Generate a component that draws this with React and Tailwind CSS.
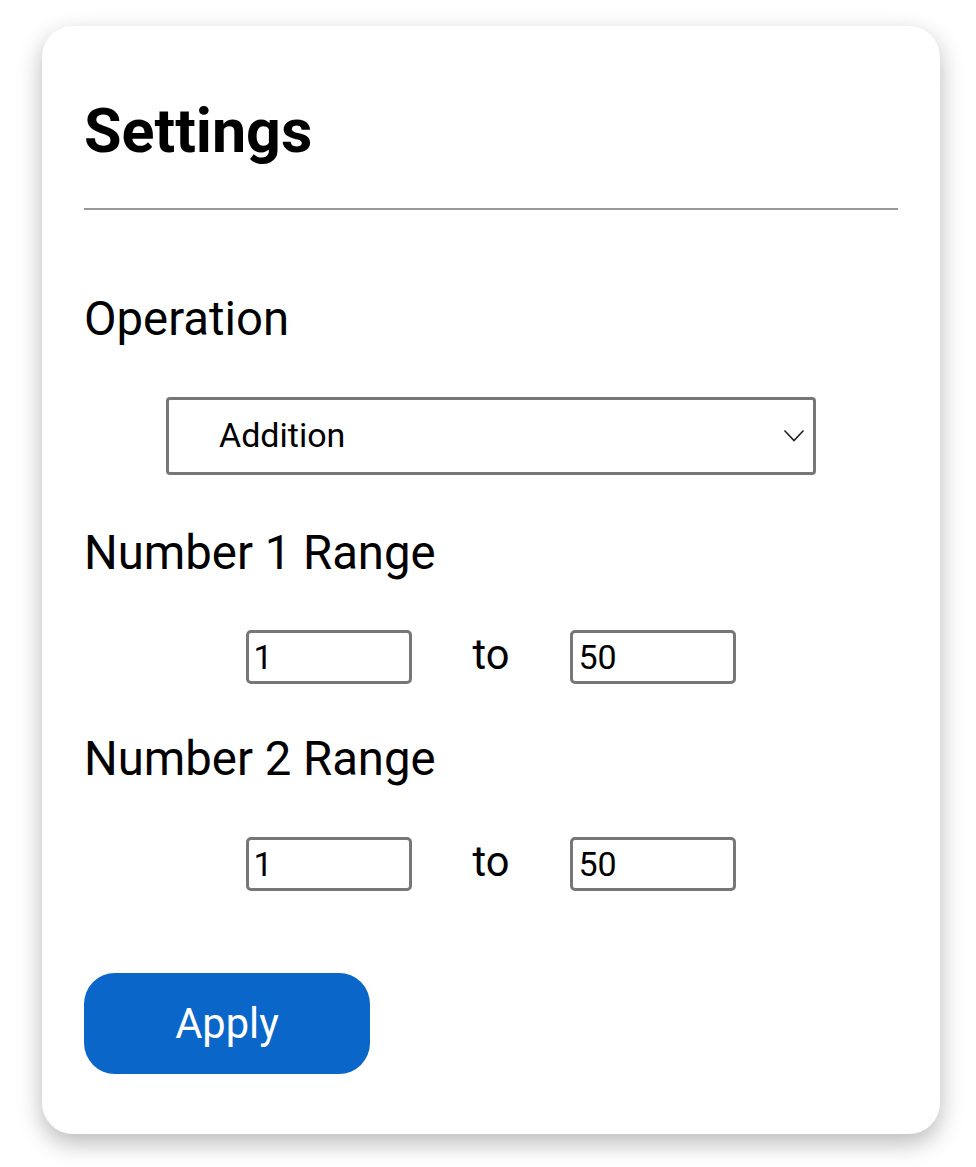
import { useState } from 'react';

const RangeRow = ({ min, max, onMin, onMax }) => (
  <div className="flex items-baseline justify-center gap-[61px]">
    <input
      className="w-[166px] h-[54px] border-[3px] border-[#777] rounded-[5px] px-[5px] text-[34px] text-black outline-none bg-white"
      value={min}
      onChange={(e) => onMin(e.target.value)}
    />
    <span className="text-[41.6px] leading-[41.6px] text-black">to</span>
    <input
      className="w-[166px] h-[54px] border-[3px] border-[#777] rounded-[5px] px-[5px] text-[34px] text-black outline-none bg-white"
      value={max}
      onChange={(e) => onMax(e.target.value)}
    />
  </div>
);

const App = () => {
  const [r1, setR1] = useState({ min: '1', max: '50' });
  const [r2, setR2] = useState({ min: '1', max: '50' });

  return (
    <div className="min-h-screen bg-white pt-[26px] pl-[42px]" style={{ fontFamily: 'Roboto, "Noto Sans", sans-serif' }}>
      <div className="w-[898px] rounded-[31px] bg-white shadow-[0_9px_24px_rgba(0,0,0,0.28)] px-[42px] pt-[74px] pb-[60px]">
        <h1 className="text-[61px] leading-[62px] font-bold text-black">Settings</h1>
        <div className="mt-[46px] h-[2px] bg-[#999]" />

        {/* Operation */}
        <p className="mt-[86px] text-[47.3px] leading-[46.8px] text-black">Operation</p>
        <div className="mt-[54px] mx-auto w-[650px] h-[78px] border-[3px] border-[#777] rounded-[4px] flex items-center justify-between pl-[50px] pr-[8px]">
          <span className="text-[34px] text-black">Addition</span>
          <svg width="22" height="14" viewBox="0 0 22 14" fill="none">
            <path d="M1.5 1.5 L11 11.5 L20.5 1.5" stroke="#222" strokeWidth="1.6" />
          </svg>
        </div>

        {/* Ranges */}
        <p className="mt-[55px] text-[47.3px] leading-[46.8px] text-black">Number 1 Range</p>
        <div className="mt-[53px]">
          <RangeRow
            min={r1.min}
            max={r1.max}
            onMin={(v) => setR1({ ...r1, min: v })}
            onMax={(v) => setR1({ ...r1, max: v })}
          />
        </div>

        <p className="mt-[52px] text-[47.3px] leading-[46.8px] text-black">Number 2 Range</p>
        <div className="mt-[55px]">
          <RangeRow
            min={r2.min}
            max={r2.max}
            onMin={(v) => setR2({ ...r2, min: v })}
            onMax={(v) => setR2({ ...r2, max: v })}
          />
        </div>

        <button className="mt-[82px] w-[286px] h-[101px] rounded-[31px] bg-[#0a66c8] text-white text-[41.6px] leading-none">
          Apply
        </button>
      </div>
    </div>
  );
};

export default App;
